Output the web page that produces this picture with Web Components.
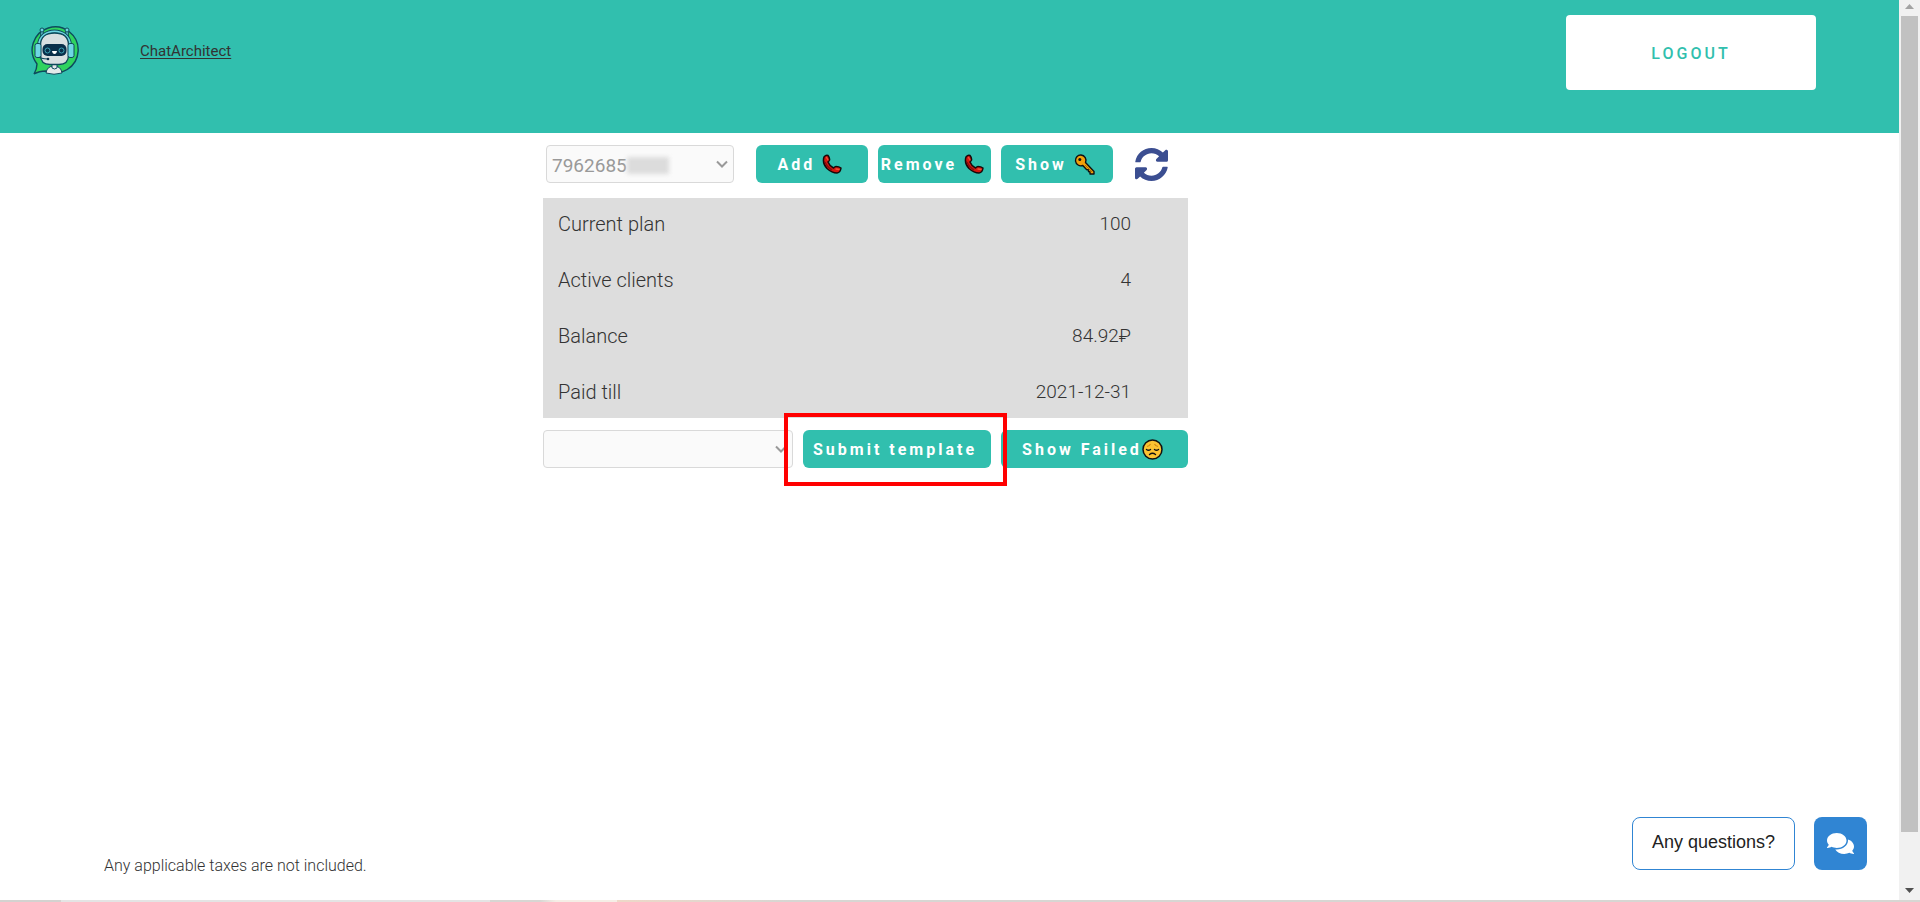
<!DOCTYPE html>
<html lang="en">
<head>
<meta charset="utf-8">
<meta name="viewport" content="width=device-width, initial-scale=1">
<title>ChatArchitect</title>
<style>
    html, body {
        height: 100%;
    }
    body {
        margin: 0;
        overflow: hidden;
        background: #fff;
        color: #333;
        font-family: Roboto, "Liberation Sans", sans-serif;
        --accent: #31bfae;
    }
</style>
</head>
<body>
<chat-app></chat-app>

<script>
// svg drawings used by <app-icon name="...">
const icons = {
    robot: `<svg viewBox="0 0 50 50">
        <path d="M7 39A23 23 0 1 1 16 46Q9 46 4 49Q7 44 7 39z" fill="#2fd35f" stroke="#0e4a5c" stroke-width="1.4"/>
        <path d="M12 5v11M37 5v11" stroke="#0e4a5c" stroke-width="3.6"/>
        <path d="M12 5v11M37 5v11" stroke="#6fd7e4" stroke-width="1.4"/>
        <circle cx="12" cy="5" r="2" fill="#6fd7e4" stroke="#0e4a5c"/>
        <circle cx="37" cy="5" r="2" fill="#6fd7e4" stroke="#0e4a5c"/>
        <path d="M9 20C10 2 39 2 40 20" fill="none" stroke="#0e4a5c" stroke-width="4"/>
        <path d="M9 20C10 2 39 2 40 20" fill="none" stroke="#6fd7e4" stroke-width="2"/>
        <path d="M16 48q1-7 8-7t8 7q-8 2.500-16 0z" fill="#e3e9ea" stroke="#0e4a5c"/>
        <path d="M22 39h5v4q-2.500 2-5 0z" fill="#e3e9ea" stroke="#0e4a5c"/>
        <path d="M10.500 20C10.500 12 16 8 24.500 8S38.500 12 38.500 20V30Q38.500 39.500 29 39.500H20Q10.500 39.500 10.500 30z" fill="#d8dfe1" stroke="#0e4a5c" stroke-width="1.300"/>
        <rect x="5" y="18.500" width="6" height="14" rx="2" fill="#6fd7e4" stroke="#0e4a5c"/>
        <rect x="38" y="18.500" width="6" height="14" rx="2" fill="#6fd7e4" stroke="#0e4a5c"/>
        <rect x="12.500" y="19" width="24" height="12" rx="5" fill="#092f4a"/>
        <circle cx="17.500" cy="25.500" r="2.500" fill="none" stroke="#3fa5b8"/>
        <circle cx="31.500" cy="25.500" r="2.500" fill="none" stroke="#3fa5b8"/>
        <path d="M22 26h5q-.5 3-2.500 3t-2.500-3z" fill="#fff"/>
        <path d="M9 32q1 1.500 9 2" fill="none" stroke="#0e4a5c" stroke-width="1.200"/>
        <circle cx="18" cy="34" r="1.300" fill="#0e3048"/>
    </svg>`,
    phone: `<svg viewBox="0 0 20 20">
        <path d="M2 3Q4 .5 6 1.500Q8 4 7.500 6Q6.500 7.500 6 8Q7.500 12 11.500 14Q13 12.500 14 12.500Q17 12.500 19 14Q18.500 18.500 15 19Q10 19 5 14.500Q0 9 2 3z" fill="#d3170f" stroke="#16090a" stroke-width="1.500" stroke-linejoin="round"/>
        <path d="M3 8Q5 13 10 16" fill="none" stroke="#8c0d0d" stroke-width="1.500"/>
        <path d="M4.500 3.500L6 6M14 15L17 15.500" stroke="#f2523a" stroke-width="1.300" stroke-linecap="round"/>
    </svg>`,
    key: `<svg viewBox="0 0 21 21">
        <path d="M1.500 7A5.300 5.300 0 0 1 7 1A5.300 5.300 0 0 1 11.500 8.500L20 17.500V20H16V18L14.500 17.500V16L12.500 15.500L8.800 11.500A5.500 5.500 0 0 1 1.500 7z" fill="#f1a10b" stroke="#111" stroke-width="1.400" stroke-linejoin="round"/>
        <circle cx="5.800" cy="5.600" r="1.500" fill="#111"/>
        <path d="M11 11l7 7" stroke="#a66a00" stroke-width=".8"/>
    </svg>`,
    sad: `<svg viewBox="0 0 21 21">
        <circle cx="10.500" cy="10.500" r="9.500" fill="#fcc332" stroke="#111" stroke-width="1.500"/>
        <path d="M5 7.500Q7.500 7 8.500 5M16 7.500Q13.500 7 12.500 5" fill="none" stroke="#d48a12" stroke-width="1.200"/>
        <path d="M4.500 10.500q2 1.500 4 0M12.500 10.500q2 1.500 4 0M7.500 15.500q3-2.500 6 0" fill="none" stroke="#111" stroke-width="1.400" stroke-linecap="round"/>
    </svg>`,
    refresh: `<svg viewBox="8 8 496 496" fill="#3b4e91"><path d="M370.720 133.280C339.458 104.008 298.888 87.962 255.848 88c-77.458.068-144.328 53.178-162.791 126.850-1.344 5.363-6.122 9.150-11.651 9.150H24.103c-7.498 0-13.194-6.807-11.807-14.176C33.933 94.924 134.813 8 256 8c66.448 0 126.791 26.136 171.315 68.685L463.030 40.970C478.149 25.851 504 36.559 504 57.941V192c0 13.255-10.745 24-24 24H345.941c-21.382 0-32.090-25.851-16.971-40.971l41.750-41.749zM32 296h134.059c21.382 0 32.090 25.851 16.971 40.971l-41.750 41.750c31.262 29.273 71.835 45.319 114.876 45.280 77.418-.07 144.315-53.144 162.787-126.849 1.344-5.363 6.122-9.150 11.651-9.150h57.304c7.498 0 13.194 6.807 11.807 14.176C478.067 417.076 377.187 504 256 504c-66.448 0-126.791-26.136-171.315-68.685L48.970 471.030C33.851 486.149 8 475.441 8 454.059V320c0-13.255 10.745-24 24-24z"/></svg>`,
    chat: `<svg viewBox="0 0 576 512" fill="#fff"><path d="M416 192c0-88.400-93.100-160-208-160S0 103.600 0 192c0 34.300 14.100 65.900 38 92-13.400 30.200-35.500 54.200-35.800 54.500-2.200 2.300-2.800 5.700-1.500 8.700S4.800 352 8 352c36.600 0 66.900-12.300 88.700-25 32.200 15.700 70.300 25 111.300 25 114.900 0 208-71.600 208-160zm122 220c23.900-26 38-57.700 38-92 0-66.900-53.500-124.200-129.300-148.100.9 6.600 1.300 13.300 1.300 20.100 0 105.900-107.700 192-240 192-10.800 0-21.300-.8-31.700-1.900C207.800 439.600 281.800 480 368 480c41 0 79.100-9.200 111.300-25 21.800 12.700 52.100 25 88.700 25 3.200 0 6.100-1.900 7.300-4.800 1.300-2.900.7-6.300-1.500-8.700-.3-.2-22.400-24.200-35.800-54.500z"/></svg>`
};

class AppIcon extends HTMLElement {
    constructor() {
        super();
        this.attachShadow({ mode: 'open' });
    }

    connectedCallback() {
        const size = this.getAttribute('size') || 20;
        this.shadowRoot.innerHTML = `
            <style>
                :host {
                    display: block;
                    flex: none;
                    width: ${size}px;
                    height: ${size}px;
                }
                svg {
                    display: block;
                    width: 100%;
                    height: 100%;
                }
            </style>
            ${icons[this.getAttribute('name')]}
        `;
    }
}
customElements.define('app-icon', AppIcon);

// green button, the label and the icon come in through the slot
class ActionButton extends HTMLElement {
    constructor() {
        super();
        this.attachShadow({ mode: 'open' });
        this.shadowRoot.innerHTML = `
            <style>
                :host {
                    display: block;
                    min-width: 0;
                }
                button {
                    display: flex;
                    align-items: center;
                    justify-content: center;
                    gap: var(--button-gap, 7px);
                    width: 100%;
                    height: 38px;
                    padding: 0 4px 0 0;
                    border: 0;
                    border-radius: 6px;
                    background: var(--accent);
                    color: #fff;
                    font: 700 16px Roboto, sans-serif;
                    letter-spacing: 3px;
                    white-space: nowrap;
                    cursor: pointer;
                }
            </style>
            <button type="button"><slot></slot></button>
        `;
    }
}
customElements.define('action-button', ActionButton);

// drop-down with its own arrow, "masked" hides the end of the number
class SelectBox extends HTMLElement {
    constructor() {
        super();
        this.attachShadow({ mode: 'open' });
    }

    connectedCallback() {
        const value = this.getAttribute('value') || '';
        const label = this.getAttribute('label');
        this.shadowRoot.innerHTML = `
            <style>
                :host {
                    display: block;
                    position: relative;
                    min-width: 0;
                }
                select {
                    appearance: none;
                    display: block;
                    box-sizing: border-box;
                    width: 100%;
                    height: 38px;
                    padding: 2px 28px 0 5px;
                    border: 1px solid #d9d9d9;
                    border-radius: 4px;
                    background: #fafafa;
                    color: #999;
                    font: 400 19px Roboto, sans-serif;
                }
                svg {
                    position: absolute;
                    top: 15px;
                    right: 6px;
                    width: 12px;
                    height: 8px;
                    pointer-events: none;
                }
                .mask {
                    display: none;
                    position: absolute;
                    top: 12px;
                    left: 81px;
                    width: 42px;
                    height: 17px;
                    background: #dcdcdc;
                    filter: blur(2px);
                    pointer-events: none;
                }
                :host([masked]) .mask {
                    display: block;
                }
            </style>
            <select aria-label="${label}"><option>${value}</option></select>
            <div class="mask"></div>
            <svg viewBox="0 0 12 8"><path d="M1 1.500l5 5 5-5" fill="none" stroke="#999" stroke-width="2"/></svg>
        `;
    }
}
customElements.define('select-box', SelectBox);

class PlanRow extends HTMLElement {
    constructor() {
        super();
        this.attachShadow({ mode: 'open' });
        this.shadowRoot.innerHTML = `
            <style>
                :host {
                    display: flex;
                    justify-content: space-between;
                    font-size: 20px;
                    font-weight: 300;
                    line-height: 24px;
                }
                slot[name="value"] {
                    font-size: 19px;
                }
            </style>
            <slot name="label"></slot>
            <slot name="value"></slot>
        `;
    }
}
customElements.define('plan-row', PlanRow);

class SiteHeader extends HTMLElement {
    constructor() {
        super();
        this.attachShadow({ mode: 'open' });
        this.shadowRoot.innerHTML = `
            <style>
                :host {
                    display: flex;
                    align-items: flex-start;
                    box-sizing: border-box;
                    height: 133px;
                    padding: 15px 83px 0 30px;
                    background: var(--accent);
                }
                app-icon {
                    margin-top: 10px;
                }
                a {
                    margin: 26px auto 0 60px;
                    color: #333;
                    font-size: 15px;
                    line-height: 20px;
                    text-underline-offset: 2px;
                }
                button {
                    width: 250px;
                    height: 75px;
                    padding: 2px 0 0;
                    border: 0;
                    border-radius: 4px;
                    background: #fff;
                    color: var(--accent);
                    font: 500 16px Roboto, sans-serif;
                    letter-spacing: 3px;
                    cursor: pointer;
                }
            </style>
            <app-icon name="robot" size="50"></app-icon>
            <a href="#">ChatArchitect</a>
            <button type="button">LOGOUT</button>
        `;
    }
}
customElements.define('site-header', SiteHeader);

class ChatWidget extends HTMLElement {
    constructor() {
        super();
        this.attachShadow({ mode: 'open' });
        this.shadowRoot.innerHTML = `
            <style>
                :host {
                    display: flex;
                    gap: 19px;
                }
                button {
                    box-sizing: border-box;
                    height: 53px;
                    border-radius: 8px;
                    cursor: pointer;
                }
                .ask {
                    padding: 0 19px 2px;
                    border: 1px solid #3085d3;
                    background: #fff;
                    color: #222;
                    font: 18px "Liberation Sans", Arial, sans-serif;
                }
                .open {
                    display: flex;
                    align-items: center;
                    justify-content: center;
                    width: 53px;
                    padding: 0;
                    border: 0;
                    background: #3085d3;
                }
            </style>
            <button class="ask" type="button">Any questions?</button>
            <button class="open" type="button" aria-label="Open chat"><app-icon name="chat" size="27"></app-icon></button>
        `;
    }
}
customElements.define('chat-widget', ChatWidget);

class ScrollTrack extends HTMLElement {
    constructor() {
        super();
        this.attachShadow({ mode: 'open' });
        this.shadowRoot.innerHTML = `
            <style>
                :host {
                    display: flex;
                    flex-direction: column;
                    align-items: center;
                    background: #f1f1f1;
                }
                svg {
                    display: block;
                    width: 21px;
                    height: 16px;
                    flex: none;
                }
                .track {
                    flex: 1;
                    width: 17px;
                }
                .thumb {
                    height: 94%;
                    background: #c1c1c1;
                }
            </style>
            <svg viewBox="0 0 21 16"><path d="M6 9l4.500-5 4.500 5z" fill="#a3a3a3"/></svg>
            <div class="track"><div class="thumb"></div></div>
            <svg viewBox="0 0 21 16"><path d="M6 4l4.500 5 4.500-5z" fill="#505050"/></svg>
        `;
    }
}
customElements.define('scroll-track', ScrollTrack);

// whole page
class ChatApp extends HTMLElement {
    constructor() {
        super();
        this.attachShadow({ mode: 'open' });
        this.shadowRoot.innerHTML = `
            <style>
                :host {
                    display: grid;
                    grid-template: 1fr 2px / 1fr 21px;
                    height: 100%;
                }
                .page {
                    display: flex;
                    flex-direction: column;
                }
                main {
                    display: grid;
                    grid-template-columns: 543fr 645fr 711fr;
                    padding-top: 12px;
                }
                .account {
                    grid-column: 2;
                    min-width: 0;
                }
                .phones {
                    display: grid;
                    grid-template-columns: 188fr 357fr 33px;
                    column-gap: 22px;
                    align-items: center;
                    padding: 0 20px 0 3px;
                }
                .actions {
                    display: grid;
                    grid-template-columns: 112fr 113fr 112fr;
                    gap: 10px;
                }
                .refresh {
                    display: flex;
                    padding: 0;
                    border: 0;
                    background: none;
                    cursor: pointer;
                }
                .plan {
                    display: flex;
                    flex-direction: column;
                    gap: 32px;
                    margin: 15px 0 12px;
                    padding: 14px 57px 14px 15px;
                    background: #ddd;
                }
                .templates {
                    display: grid;
                    grid-template-columns: 250fr 188fr 187fr;
                    gap: 10px;
                }
                .target {
                    position: relative;
                }
                .frame {
                    position: absolute;
                    inset: -17px -16px -18px -19px;
                    border: 4px solid #f00;
                    pointer-events: none;
                }
                .failed {
                    --button-gap: 0;
                }
                footer {
                    display: flex;
                    justify-content: space-between;
                    align-items: flex-end;
                    margin-top: auto;
                    padding: 0 32px 24px 104px;
                }
                footer p {
                    margin: 0;
                    font-size: 16px;
                    font-weight: 300;
                    line-height: 20px;
                }
                chat-widget {
                    margin-bottom: 6px;
                }
                .edge {
                    grid-column: 1 / 3;
                    background: linear-gradient(90deg, #d4d2d0 61px, #e4e4e4 61px 490px, #d8d6d3 490px 540px, #f5eee6 556px 617px, #eed8c8 617px, #d8d6d3 790px);
                }
            </style>
            <div class="page">
                <site-header></site-header>
                <main>
                    <div class="account">
                        <div class="phones">
                            <select-box label="Phone number" value="7962685" masked></select-box>
                            <div class="actions">
                                <action-button>Add <app-icon name="phone"></app-icon></action-button>
                                <action-button>Remove <app-icon name="phone"></app-icon></action-button>
                                <action-button>Show <app-icon name="key" size="21"></app-icon></action-button>
                            </div>
                            <button class="refresh" type="button" aria-label="Refresh"><app-icon name="refresh" size="33"></app-icon></button>
                        </div>
                        <div class="plan">
                            <plan-row><span slot="label">Current plan</span><span slot="value">100</span></plan-row>
                            <plan-row><span slot="label">Active clients</span><span slot="value">4</span></plan-row>
                            <plan-row><span slot="label">Balance</span><span slot="value">84.92₽</span></plan-row>
                            <plan-row><span slot="label">Paid till</span><span slot="value">2021-12-31</span></plan-row>
                        </div>
                        <div class="templates">
                            <select-box label="Template"></select-box>
                            <div class="target">
                                <action-button>Submit template</action-button>
                                <div class="frame"></div>
                            </div>
                            <action-button class="failed">Show Failed<app-icon name="sad" size="21"></app-icon></action-button>
                        </div>
                    </div>
                </main>
                <footer>
                    <p>Any applicable taxes are not included.</p>
                    <chat-widget></chat-widget>
                </footer>
            </div>
            <scroll-track></scroll-track>
            <div class="edge"></div>
        `;
    }
}
customElements.define('chat-app', ChatApp);
</script>
</body>
</html>
